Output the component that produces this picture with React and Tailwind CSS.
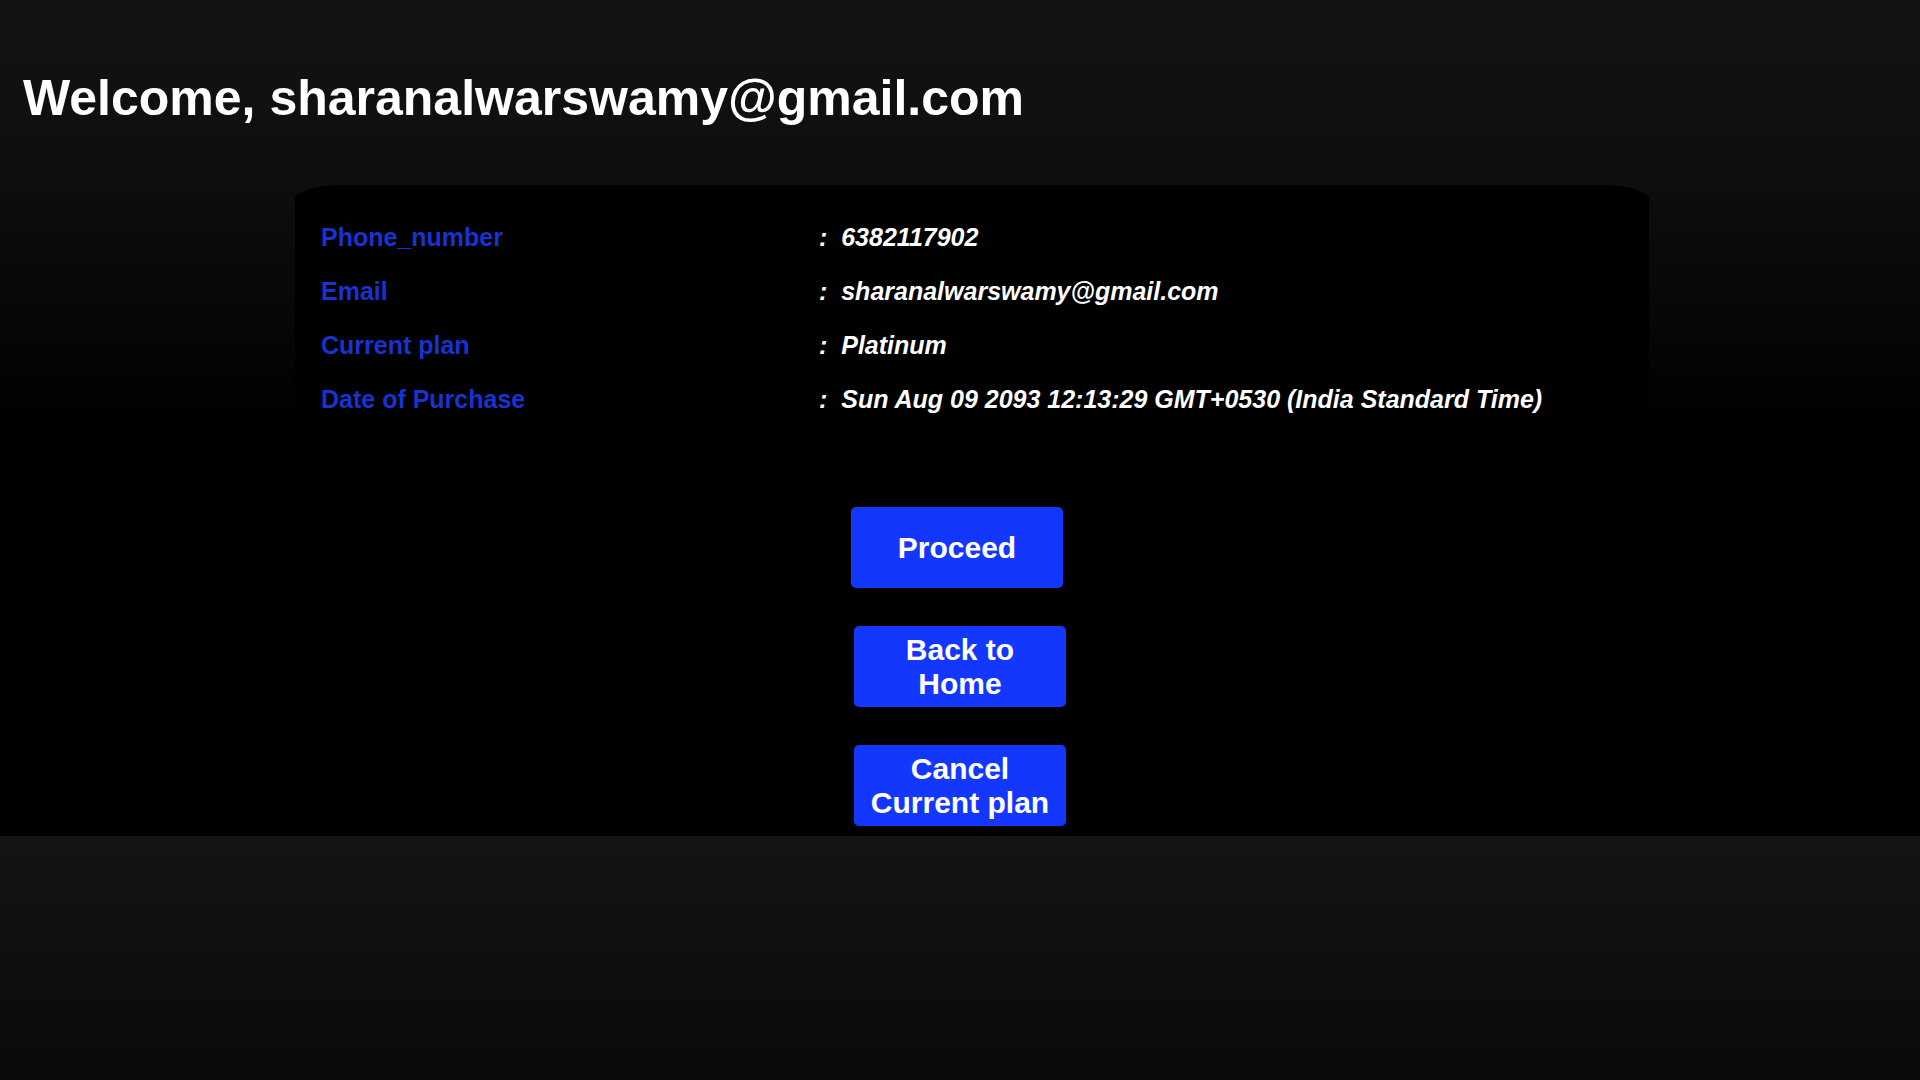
import React from 'react';

// account details shown in the card
const details = [
    { label: 'Phone_number', value: '6382117902' },
    { label: 'Email', value: 'sharanalwarswamy@gmail.com' },
    { label: 'Current plan', value: 'Platinum' },
    { label: 'Date of Purchase', value: 'Sun Aug 09 2093 12:13:29 GMT+0530 (India Standard Time)' },
];

function ActionButton({ children, className = '' }) {
    return (
        <button
            className={`w-[212px] h-[81px] px-[16px] rounded-[5px] bg-[#1437fe] text-white text-[30px] font-bold leading-[normal] text-center ${className}`}
        >
            {children}
        </button>
    );
}

export default function App() {
    return (
        <div className="min-h-screen flex flex-col font-['Liberation_Sans',Arial,sans-serif]">
            <div className="h-[836px] bg-[linear-gradient(to_bottom,#131313_0px,#0e0e0e_180px,#020202_400px,#000000_420px,#000000_836px)]">
                <h1 className="pt-[69px] pl-[23px] text-[50px] font-bold leading-[normal] text-white">
                    Welcome, sharanalwarswamy@gmail.com
                </h1>

                <div className="ml-[295px] mt-[58px] w-[1354px] bg-black rounded-tl-[50px_14px] rounded-tr-[50px_14px] pt-[25px] pl-[26px]">
                    {details.map((d) => (
                        <div key={d.label} className="grid grid-cols-[498px_1fr] text-[25px] font-bold leading-[54px]">
                            <span className="text-[#1733d1]">{d.label}</span>
                            <span className="text-white italic whitespace-nowrap">{':\u00a0\u00a0' + d.value}</span>
                        </div>
                    ))}
                </div>

                <div className="mt-[81px] flex flex-col items-center gap-[38px]">
                    <ActionButton className="mr-[6px]">Proceed</ActionButton>
                    <ActionButton>Back to Home</ActionButton>
                    <ActionButton>Cancel Current plan</ActionButton>
                </div>
            </div>
            <div className="flex-1 bg-[linear-gradient(to_bottom,#141414,#0a0a0a)]"></div>
        </div>
    );
}
